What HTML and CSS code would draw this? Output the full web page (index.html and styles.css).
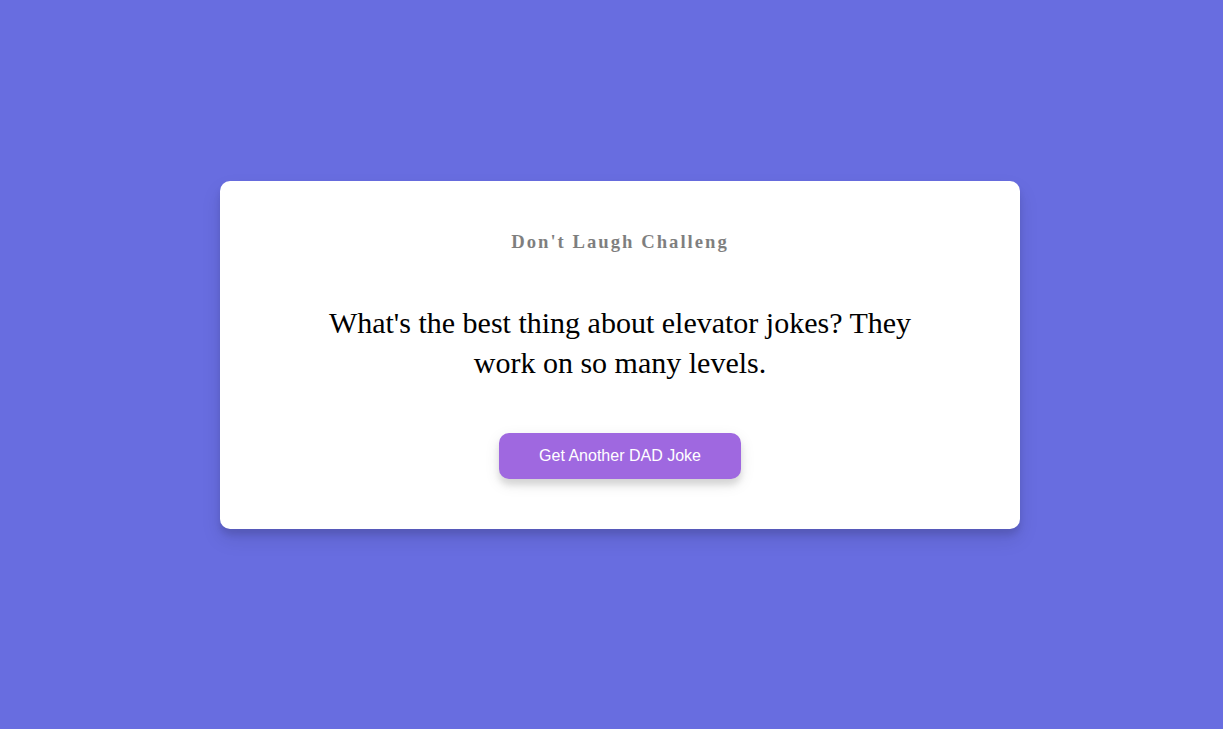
FILE: index.html
```html
<!DOCTYPE html>
<html lang="en">
<head>
<meta charset="UTF-8">
<title>Dad Jokes</title>
<link rel="stylesheet" href="styles.css">
</head>
<body>
  <div class="container">
    <h3 class="title">Don't Laugh Challeng</h3>
    <div class="joke">What's the best thing about elevator jokes? They work on so many levels.</div>
    <button class="btn">Get Another DAD Joke</button>
  </div>
</body>
</html>
```

FILE: styles.css
```css
* {
  box-sizing: border-box;
}

html, body {
  margin: 0;
}

body {
  background-color: #686de0;
  font-family: "Liberation Serif", "Times New Roman", serif;
  display: flex;
  flex-direction: column;
  align-items: center;
  justify-content: center;
  height: 100vh;
  overflow: hidden;
  padding: 0 0 19px 17px;
}

.container {
  background-color: #fff;
  border-radius: 10px;
  box-shadow: 0 10px 20px rgba(0, 0, 0, 0.1), 0 6px 6px rgba(0, 0, 0, 0.1);
  padding: 50px 20px;
  text-align: center;
  max-width: 100%;
  width: 800px;
}

.title {
  margin: 0;
  font-size: 18.72px;
  font-weight: bold;
  opacity: 0.5;
  letter-spacing: 2px;
}

.joke {
  font-size: 30px;
  line-height: 40px;
  margin: 50px auto;
  max-width: 600px;
}

.btn {
  background-color: #9f68e0;
  color: #fff;
  border: 0;
  border-radius: 10px;
  box-shadow: 0 5px 15px rgba(0, 0, 0, 0.1), 0 6px 6px rgba(0, 0, 0, 0.1);
  padding: 14px 40px;
  font-family: "Liberation Sans", Arial, sans-serif;
  font-size: 16px;
  cursor: pointer;
}
```
